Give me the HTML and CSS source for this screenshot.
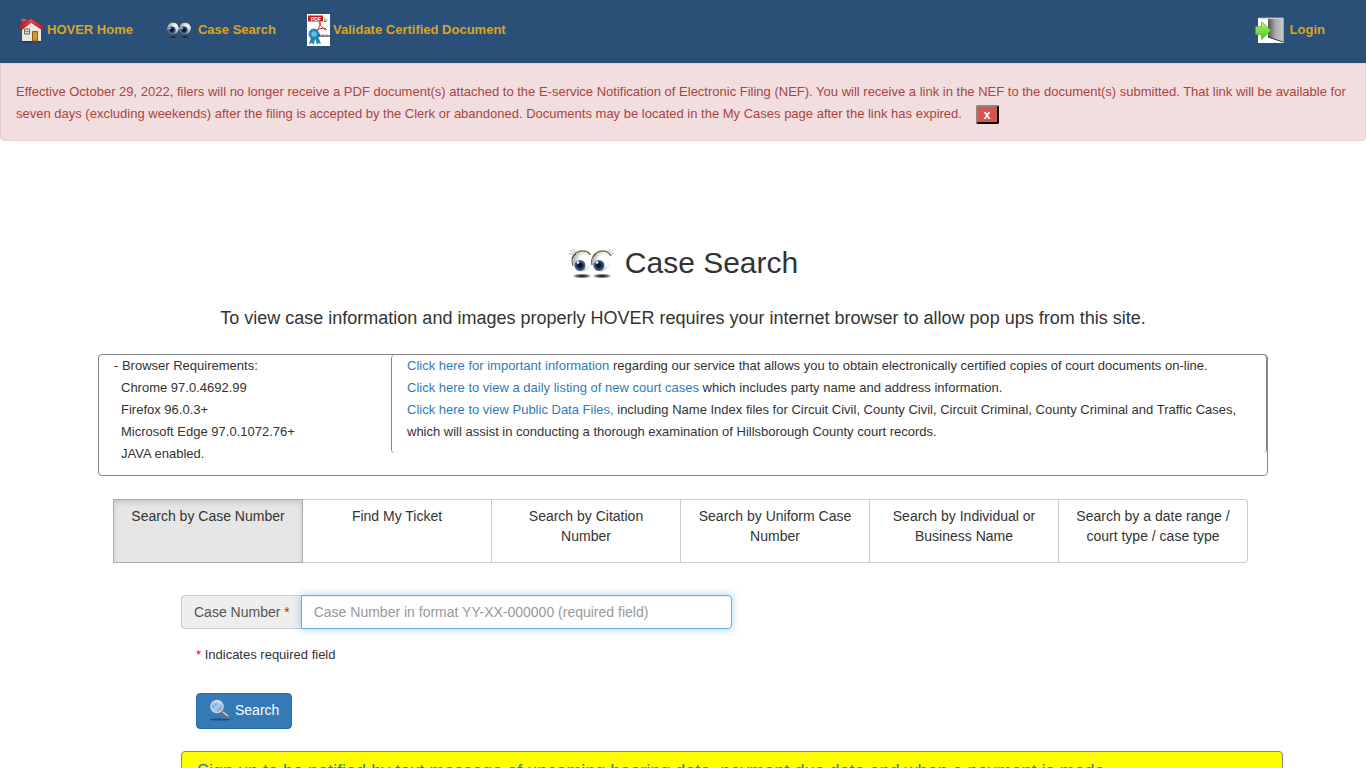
FILE: index.html
```html
<!DOCTYPE html>
<html lang="en">
<head>
<meta charset="utf-8">
<title>HOVER - Case Search</title>
<meta name="viewport" content="width=device-width, initial-scale=1">
<link rel="stylesheet" href="styles.css">
</head>
<body>
<svg class="defs" aria-hidden="true">
  <defs>
    <radialGradient id="ball" cx=".65" cy=".45" r=".6"><stop offset=".45" stop-color="#fff"/><stop offset="1" stop-color="#b4bac3"/></radialGradient>
    <radialGradient id="ball-dim" cx=".65" cy=".4" r=".65"><stop offset=".2" stop-color="#f4f6fa"/><stop offset="1" stop-color="#7d8ba0"/></radialGradient>
    <radialGradient id="iris"><stop offset=".3" stop-color="#071326"/><stop offset=".65" stop-color="#2b4464"/><stop offset="1" stop-color="#5a7594"/></radialGradient>
    <radialGradient id="shade"><stop offset="0" stop-color="#111"/><stop offset=".5" stop-color="#333" stop-opacity=".8"/><stop offset="1" stop-color="#555" stop-opacity="0"/></radialGradient>
    <linearGradient id="roof" x2="0" y2="1"><stop stop-color="#f25555"/><stop offset="1" stop-color="#c40f1b"/></linearGradient>
    <linearGradient id="door"><stop stop-color="#555"/><stop offset=".5" stop-color="#aaa"/><stop offset="1" stop-color="#c8ccc8"/></linearGradient>
    <linearGradient id="green" x2="0" y2="1"><stop stop-color="#b2f16e"/><stop offset="1" stop-color="#4dc91b"/></linearGradient>
    <linearGradient id="lens" x2="1" y2="1"><stop stop-color="#326fc2"/><stop offset=".5" stop-color="#a7d0f1"/><stop offset="1" stop-color="#4b8bd0"/></linearGradient>
  </defs>
</svg>
<nav class="navbar">
  <a class="nav-link" href="#">
    <svg class="icon-home" viewBox="0 0 26 26" aria-hidden="true">
      <ellipse cx="13" cy="24.500" rx="11" ry="1" fill="#112a43" opacity=".6"/>
      <path d="M4 3h4v6H4z" fill="#c92b31"/><path d="M3.500 2h5v2h-5z" fill="#ea555a"/>
      <path d="M4 11l9-7 10 8v12H4z" fill="#e9e8e3"/>
      <path d="M.8 11L12.500 1.500 25.500 10l-2.500 2-10-6.500L3.500 13z" fill="url(#roof)" stroke="#b8111e" stroke-width=".6"/>
      <path d="M6.500 12h5v5h-5z" fill="#fff" stroke="#65615b"/><path d="M9 12v5M6.500 14.500h5" stroke="#65615b" stroke-width=".7"/>
      <path d="M14.500 14.500h5V24h-5z" fill="#d39222" stroke="#8b601b"/><circle cx="18" cy="19.500" r=".6" fill="#ffe49a"/>
    </svg>
    HOVER Home</a>
  <a class="nav-link" href="#">
    <svg class="icon-eyes" viewBox="0 0 28 20" aria-hidden="true">
      <ellipse cx="8" cy="17" rx="6" ry="1.800" fill="url(#shade)"/><ellipse cx="20" cy="17" rx="6" ry="1.800" fill="url(#shade)"/>
      <ellipse cx="8" cy="8" rx="6" ry="6" fill="url(#ball-dim)"/><ellipse cx="20" cy="8" rx="6" ry="6" fill="url(#ball-dim)"/>
      <circle cx="7" cy="10" r="3.800" fill="url(#iris)"/><circle cx="19" cy="10" r="3.800" fill="url(#iris)"/>
      <circle cx="5" cy="8.500" r=".8" fill="#fff"/><circle cx="17" cy="8.500" r=".8" fill="#fff"/>
      <path d="M2 7Q3 2 8 2t6 5M14 7q1-5 6-5t6 4" fill="none" stroke="#35404d"/>
    </svg>
    Case Search</a>
  <a class="nav-link" href="#">
    <svg class="icon-pdf" viewBox="0 0 23 32" aria-hidden="true">
      <path d="M0 0h23v32H0z" fill="#fff"/><path d="M1 1.500h15v6H1z" fill="#c81c18"/>
      <text x="4" y="6.500" class="pdf-label">PDF</text>
      <path d="M17 2l5 5h-5z" fill="#b9d7bd"/><path d="M17 6l3 2h-3z" fill="#548459"/>
      <path d="M12 8q2-1 1 3t-4 7q-1-1 3-3 5-2 7 0 1 2-2 0-4-3-5-7" fill="none" stroke="#dc3430"/>
      <text x="11" y="22.500" class="adobe-label">Adobe</text>
      <path d="M4 23l-2 7 3-1 2 2 1-7 2 7 1-2 3 1-3-8z" fill="#2486b7"/>
      <circle cx="7" cy="20" r="5" fill="#2489ba" stroke="#1b6f9f" stroke-dasharray="1.500 .7"/><circle cx="7" cy="20" r="2.700" fill="#65bce1"/>
    </svg>
    Validate Certified Document</a>
  <a class="nav-link nav-login" href="#">
    <svg class="icon-login" viewBox="0 0 30 27" aria-hidden="true">
      <path d="M3 1h26v25H3z" fill="#fff"/><path d="M13 2h15v23l-15-5z" fill="url(#door)"/><path d="M28.500 1v25M4 1h24" stroke="#9ba4a7"/>
      <path d="M13 20l15 5" stroke="#303a40"/>
      <path d="M.5 9.500h6v-5l9.500 9-9.500 9v-5h-6z" fill="url(#green)" stroke="#42a51f" stroke-width=".6"/>
    </svg>
    Login</a>
</nav>
<div class="alert" role="alert">
  Effective October 29, 2022, filers will no longer receive a PDF document(s) attached to the E-service Notification of Electronic Filing (NEF). You will receive a link in the NEF to the document(s) submitted. That link will be available for seven days (excluding weekends) after the filing is accepted by the Clerk or abandoned. Documents may be located in the My Cases page after the link has expired.
  <button class="alert-close" type="button" aria-label="Close notice">x</button>
</div>
<main class="container">
  <h1 class="title">
    <svg class="title-icon" viewBox="0 0 48 32" aria-hidden="true">
      <ellipse cx="14" cy="29" rx="10" ry="2.500" fill="url(#shade)"/><ellipse cx="34" cy="29" rx="10" ry="2.500" fill="url(#shade)"/>
      <ellipse cx="14" cy="14.500" rx="9" ry="10" fill="url(#ball)"/><ellipse cx="33" cy="14.500" rx="9" ry="10" fill="url(#ball)"/>
      <circle cx="12" cy="18.500" r="5.500" fill="url(#iris)"/><circle cx="31" cy="18.500" r="5.500" fill="url(#iris)"/>
      <circle cx="10" cy="15.500" r="1.300" fill="#fff"/><circle cx="29" cy="15.500" r="1.300" fill="#fff"/>
      <path d="M4 12Q7 4 14 4q7 0 8 4M25 10q3-6 10-6 5 0 8 5" fill="none" stroke="#887532" stroke-width="1.600"/>
      <path d="M5 19q-3-8 3-12M24 18q-2-7 4-11" fill="none" stroke="#4e4b42"/>
      <path d="M7 7L2 3M6 8L1 6M8 6L5 2M41 7l4-4M42 8l4-2M40 6l2-4" stroke="#8b8a80" stroke-width=".7"/>
    </svg>
    Case Search</h1>
  <p class="lead">To view case information and images properly HOVER requires your internet browser to allow pop ups from this site.</p>
  <section class="info">
    <ul class="requirements">
      <li class="req-head">- Browser Requirements:</li>
      <li>Chrome 97.0.4692.99</li>
      <li>Firefox 96.0.3+</li>
      <li>Microsoft Edge 97.0.1072.76+</li>
      <li>JAVA enabled.</li>
    </ul>
    <div class="notices">
      <a href="#">Click here for important information</a> regarding our service that allows you to obtain electronically certified copies of court documents on-line.<br>
      <a href="#">Click here to view a daily listing of new court cases</a> which includes party name and address information.<br>
      <a href="#">Click here to view Public Data Files,</a> including Name Index files for Circuit Civil, County Civil, Circuit Criminal, County Criminal and Traffic Cases, which will assist in conducting a thorough examination of Hillsborough County court records.
    </div>
  </section>
  <div class="tabs">
    <button class="tab tab-active" type="button">Search by Case Number</button>
    <button class="tab" type="button">Find My Ticket</button>
    <button class="tab" type="button">Search by Citation Number</button>
    <button class="tab" type="button">Search by Uniform Case Number</button>
    <button class="tab" type="button">Search by Individual or Business Name</button>
    <button class="tab" type="button">Search by a date range / court type / case type</button>
  </div>
  <form class="search-form">
    <div class="input-group">
      <label class="addon" for="case-number">Case Number <span class="required">*</span></label>
      <input class="case-input" id="case-number" type="text" placeholder="Case Number in format YY-XX-000000 (required field)">
    </div>
    <p class="hint"><span class="required">*</span> Indicates required field</p>
    <button class="search-button" type="submit">
      <svg class="icon-search" viewBox="0 0 22 22" aria-hidden="true">
        <ellipse cx="11" cy="20.500" rx="10" ry="1" fill="#183f68" opacity=".7"/>
        <path d="M13 13l6 5" stroke="#77756c" stroke-width="3.500" stroke-linecap="round"/><path d="M14 13l5 4" stroke="#ddd" stroke-width="1.300"/>
        <circle cx="8" cy="7.500" r="6" fill="url(#lens)" stroke="#d0d6dc" stroke-width="1.600"/><path d="M4 6q3-5 7-2" stroke="#eef8ff" fill="none"/>
      </svg>
      Search</button>
    <div class="signup"><a href="#">Sign up to be notified by text message of upcoming hearing date, payment due date and when a payment is made.</a></div>
  </form>
</main>
</body>
</html>
```
FILE: styles.css
```css
* { box-sizing: border-box; }
body { margin: 0; background: #fff; color: #333; font: 13px/22px "Liberation Sans", Arial, sans-serif; }
a { color: #337ab7; text-decoration: none; }
button, input { font-family: inherit; }
svg { flex: none; }
.defs { position: absolute; width: 0; height: 0; }
.navbar { display: flex; align-items: center; gap: 32px; height: 63px; padding: 0 41px 3px 18px; background: #2a5078; }
.nav-link { display: flex; align-items: center; gap: 3px; color: #daa520; font-weight: bold; }
.nav-link:nth-child(2) { gap: 5px; }
.nav-link:nth-child(3) { margin-left: -1px; }
.nav-login { gap: 5px; margin-left: auto; }
.icon-home { width: 26px; height: 26px; }
.icon-eyes { width: 28px; height: 20px; }
.icon-pdf { width: 23px; height: 32px; }
.icon-login { width: 30px; height: 27px; }
.pdf-label { fill: #fff; font-size: 5px; }
.adobe-label { fill: #222; font-size: 4px; }
.alert { padding: 17px 15px 15px; border: 1px solid #ebccd1; border-radius: 0 0 4px 4px; background: #f2dede; color: #a94442; }
.alert-close { width: 23px; height: 19px; margin-left: 10px; padding: 0; border: 2px outset #333; border-radius: 2px; background: #d9534f; color: #fff; font-size: 12px; font-weight: bold; line-height: 12px; vertical-align: middle; }
.container { max-width: 1170px; margin: 0 auto; padding-top: 104px; }
.title { display: flex; justify-content: center; align-items: center; gap: 9px; margin: 0; font-size: 30px; font-weight: normal; line-height: 36px; }
.title-icon { width: 48px; height: 32px; }
.lead { margin: 24px 0 23px; font-size: 18px; line-height: 26px; text-align: center; }
.info { display: flex; align-items: flex-start; min-height: 122px; border: 1px solid #888; border-radius: 4px; }
.requirements { flex: 0 0 25%; margin: 0; padding: 0 15px; list-style: none; }
.requirements li { padding-left: 7px; }
.requirements .req-head { padding-left: 0; }
.notices { flex: 1; min-height: 98px; padding: 0 15px; border: solid #888; border-width: 0 1px; border-radius: 4px; }
.tabs { display: flex; margin: 23px 20px 0 15px; }
.tab { flex: 1 1 0; height: 64px; padding: 6px 12px; display: flex; justify-content: center; align-items: flex-start; border: 1px solid #ccc; border-left-width: 0; background: #fff; color: #333; font-size: 14px; line-height: 20px; }
.tab:last-child { border-radius: 0 4px 4px 0; }
.tab-active { border-color: #adadad; border-left-width: 1px; background: #e6e6e6; box-shadow: inset 0 3px 5px rgba(0, 0, 0, .125); }
.search-form { margin: 32px -15px 0 83px; }
.input-group { display: flex; width: 50%; height: 34px; }
.addon { padding: 6px 11px 6px 12px; border: 1px solid #ccc; border-right: 0; border-radius: 4px 0 0 4px; background: #eee; color: #555; font-size: 14px; line-height: 20px; white-space: nowrap; }
.required { color: #f00; }
.case-input { flex: 1; min-width: 0; padding: 6px 12px; border: 1px solid #66afe9; border-radius: 0 4px 4px 0; outline: 0; box-shadow: inset 0 1px 1px rgba(0, 0, 0, .075), 0 0 8px rgba(102, 175, 233, .6); color: #555; font-size: 14px; line-height: 20px; }
.case-input::placeholder { color: #999; opacity: 1; }
.hint { margin: 15px 15px 27px; }
.search-button { display: flex; align-items: center; gap: 4px; height: 36px; margin-left: 15px; padding: 0 12px 2px; border: 1px solid #2e6da4; border-radius: 4px; background: #337ab7; color: #fff; font-size: 14px; }
.icon-search { width: 22px; height: 22px; }
.signup { margin-top: 22px; padding: 6px 15px; border: 1px solid #888; border-radius: 4px; background: #ff0; font-size: 18px; line-height: 26px; }
```
